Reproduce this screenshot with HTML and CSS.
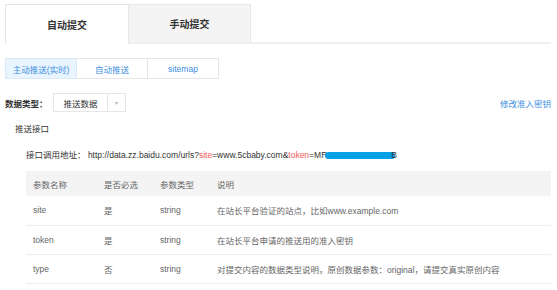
FILE: index.html
```html
<!doctype html>
<html lang="zh-CN">
    <head>
        <meta charset="UTF-8" />
        <title>链接提交</title>
        <link rel="stylesheet" href="styles.css">
    </head>
    <body>
        <div class="page">
            <div class="main-tabs">
                <div class="main-tab active">自动提交</div>
                <div class="main-tab">手动提交</div>
            </div>

            <div class="sub-tabs">
                <div class="sub-tab active">主动推送(实时)</div>
                <div class="sub-tab">自动推送</div>
                <div class="sub-tab">sitemap</div>
            </div>

            <div class="type-row">
                <span class="type-label">数据类型：</span>
                <div class="select">
                    <span class="select-value">推送数据</span>
                    <span class="select-arrow">&#9662;</span>
                </div>
                <a class="key-link" href="#">修改准入密钥</a>
            </div>

            <div class="section-title">推送接口</div>

            <div class="api-url">
                <span class="api-label">接口调用地址：</span>
                <span>http://data.zz.baidu.com/urls?<em>site</em>=www.5cbaby.com&amp;<em>token</em>=MR<span class="redact"></span>B</span>
            </div>

            <table class="params">
                <thead>
                    <tr>
                        <th class="col-name">参数名称</th>
                        <th class="col-req">是否必选</th>
                        <th class="col-type">参数类型</th>
                        <th>说明</th>
                    </tr>
                </thead>
                <tbody>
                    <tr>
                        <td>site</td>
                        <td>是</td>
                        <td>string</td>
                        <td>在站长平台验证的站点，比如www.example.com</td>
                    </tr>
                    <tr>
                        <td>token</td>
                        <td>是</td>
                        <td>string</td>
                        <td>在站长平台申请的推送用的准入密钥</td>
                    </tr>
                    <tr>
                        <td>type</td>
                        <td>否</td>
                        <td>string</td>
                        <td>对提交内容的数据类型说明，原创数据参数：original，请提交真实原创内容</td>
                    </tr>
                </tbody>
            </table>
        </div>
    </body>
</html>
```

FILE: styles.css
```css
:root {
    --blue: #3d8fe0;
    --red: #f55a5a;
    --text: #666666;
    --dark: #333333;
    --line: #e6e6e6;
    --light-bg: #f4f4f4;
}

body {
    margin: 0;
    font-family: "Liberation Sans", "Noto Sans CJK SC", sans-serif;
    font-size: 8.5px;
    color: var(--text);
    background: #ffffff;
}

.page {
    padding: 4px 6px 0 5px;
}

/* top tabs */
.main-tabs {
    display: flex;
    border-bottom: 2px solid #efefef;
}

.main-tab {
    width: 123px;
    height: 38px;
    box-sizing: border-box;
    display: flex;
    align-items: center;
    justify-content: center;
    font-size: 10px;
    font-weight: bold;
    color: var(--dark);
    background: var(--light-bg);
    border: 1px solid var(--line);
    border-bottom: none;
    margin-bottom: -2px;
}

.main-tab.active {
    background: #ffffff;
    border-right: none;
    height: 40px;
}

/* sub tabs */
.sub-tabs {
    display: flex;
    margin-top: 14px;
}

.sub-tab {
    width: 72px;
    height: 21px;
    box-sizing: border-box;
    display: flex;
    align-items: center;
    justify-content: center;
    color: var(--blue);
    border: 1px solid var(--line);
    margin-right: -1px;
}

.sub-tab.active {
    background: #e8f4fe;
    border-color: #dbe9f6;
    position: relative;
}

/* data type row */
.type-row {
    display: flex;
    align-items: center;
    margin-top: 14px;
    height: 19px;
}

.type-label {
    font-weight: bold;
    color: var(--dark);
    width: 48px;
}

.select {
    display: flex;
    width: 73px;
    height: 19px;
    box-sizing: border-box;
    border: 1px solid var(--line);
}

.select-value {
    flex: 1;
    display: flex;
    align-items: center;
    justify-content: center;
    border-right: 1px solid var(--line);
    color: var(--dark);
}

.select-arrow {
    width: 17px;
    display: flex;
    align-items: center;
    justify-content: center;
    color: #b5b5b5;
    font-size: 6px;
}

.key-link {
    margin-left: auto;
    color: var(--blue);
    text-decoration: none;
}

.section-title {
    margin: 10px 0 0 10px;
    color: var(--dark);
}

.api-url {
    margin: 14px 0 0 21px;
    color: var(--dark);
}

.api-url em {
    font-style: normal;
    color: var(--red);
}

.redact {
    display: inline-block;
    width: 70px;
    height: 7px;
    margin: 0 -4px 0 -2px;
    background: #0aa0e6;
    border-radius: 5px;
    vertical-align: middle;
}

/* params table */
.params {
    margin: 11px 0 0 21px;
    width: 525px;
    border-collapse: collapse;
}

.params th,
.params td {
    text-align: left;
    font-weight: normal;
    padding: 0 0 0 7px;
    color: var(--text);
}

.params th {
    height: 25px;
    background: var(--light-bg);
}

.params td {
    height: 29px;
    box-sizing: border-box;
    border-bottom: 1px solid #eeeeee;
}

.col-name {
    width: 64px;
}

.col-req {
    width: 49px;
}

.col-type {
    width: 50px;
}
```
